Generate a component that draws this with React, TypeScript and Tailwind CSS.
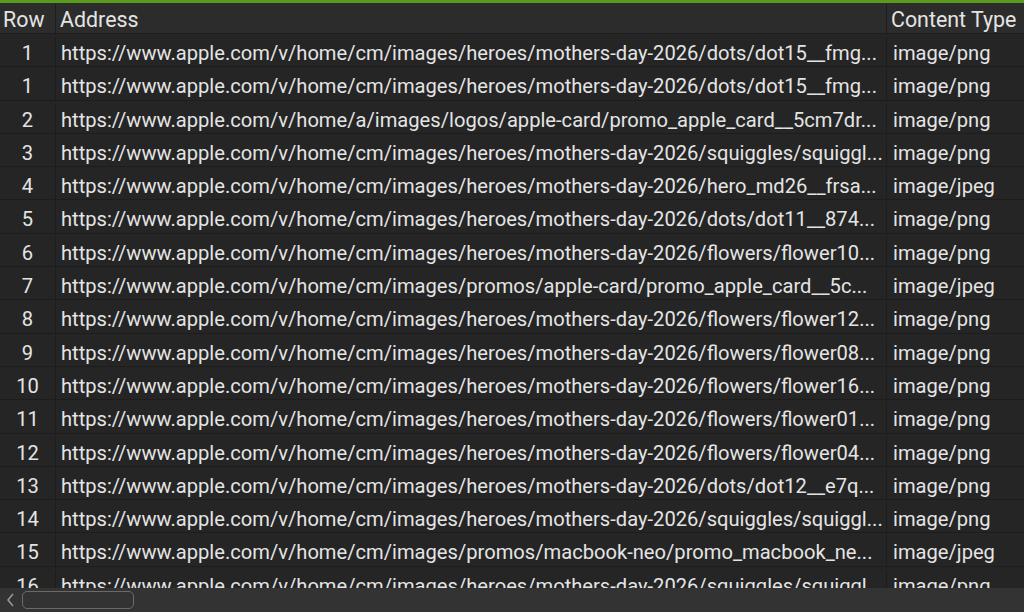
import React from "react";

const rows: [string, string, string][] = [
  ["1", "https://www.apple.com/v/home/cm/images/heroes/mothers-day-2026/dots/dot15__fmg...", "image/png"],
  ["1", "https://www.apple.com/v/home/cm/images/heroes/mothers-day-2026/dots/dot15__fmg...", "image/png"],
  ["2", "https://www.apple.com/v/home/a/images/logos/apple-card/promo_apple_card__5cm7dr...", "image/png"],
  ["3", "https://www.apple.com/v/home/cm/images/heroes/mothers-day-2026/squiggles/squiggl...", "image/png"],
  ["4", "https://www.apple.com/v/home/cm/images/heroes/mothers-day-2026/hero_md26__frsa...", "image/jpeg"],
  ["5", "https://www.apple.com/v/home/cm/images/heroes/mothers-day-2026/dots/dot11__874...", "image/png"],
  ["6", "https://www.apple.com/v/home/cm/images/heroes/mothers-day-2026/flowers/flower10...", "image/png"],
  ["7", "https://www.apple.com/v/home/cm/images/promos/apple-card/promo_apple_card__5c...", "image/jpeg"],
  ["8", "https://www.apple.com/v/home/cm/images/heroes/mothers-day-2026/flowers/flower12...", "image/png"],
  ["9", "https://www.apple.com/v/home/cm/images/heroes/mothers-day-2026/flowers/flower08...", "image/png"],
  ["10", "https://www.apple.com/v/home/cm/images/heroes/mothers-day-2026/flowers/flower16...", "image/png"],
  ["11", "https://www.apple.com/v/home/cm/images/heroes/mothers-day-2026/flowers/flower01...", "image/png"],
  ["12", "https://www.apple.com/v/home/cm/images/heroes/mothers-day-2026/flowers/flower04...", "image/png"],
  ["13", "https://www.apple.com/v/home/cm/images/heroes/mothers-day-2026/dots/dot12__e7q...", "image/png"],
  ["14", "https://www.apple.com/v/home/cm/images/heroes/mothers-day-2026/squiggles/squiggl...", "image/png"],
  ["15", "https://www.apple.com/v/home/cm/images/promos/macbook-neo/promo_macbook_ne...", "image/jpeg"],
  ["16", "https://www.apple.com/v/home/cm/images/heroes/mothers-day-2026/squiggles/squiggl...", "image/png"],
];

export default function App() {
  return (
    <div
      className="w-[1024px] h-[612px] overflow-hidden bg-[#252525] flex flex-col text-[#e4e4e4]"
      style={{ fontFamily: "Roboto, 'Noto Sans', sans-serif" }}
    >
      <div className="h-[3px] bg-[#5b9a1c] shrink-0" />
      <div className="flex-1 overflow-hidden">
        <div className="grid grid-cols-[56px_831px_137px] h-[31px] bg-[#2c2c2c] border-b border-[#1d1d1d] text-[21.4px] leading-[31px] pt-[1px]">
          <div className="pl-[3px] border-r border-[#1d1d1d]">Row</div>
          <div className="pl-[4px] border-r border-[#1d1d1d]">Address</div>
          <div className="pl-[4px]">Content Type</div>
        </div>
        {rows.map((r, i) => (
          <div
            key={i}
            className="grid grid-cols-[56px_831px_137px] h-[33.3px] border-b border-[#1d1d1d] text-[20.15px] leading-[32px] pt-[3px]"
          >
            <div className="text-center border-r border-[#1d1d1d]">{r[0]}</div>
            <div className="pl-[5px] border-r border-[#1d1d1d] whitespace-nowrap overflow-hidden">{r[1]}</div>
            <div className="pl-[6px] whitespace-nowrap">{r[2]}</div>
          </div>
        ))}
      </div>
      <div className="h-[24px] shrink-0 bg-[#333333] flex items-center">
        <svg width="20" height="20" viewBox="0 0 20 20" className="ml-[1px]">
          <path d="M12 4 L7 10 L12 16" stroke="#9a9a9a" strokeWidth="1.5" fill="none" />
        </svg>
        <div className="ml-[1px] w-[112px] h-[18px] rounded-[5px] border border-[#6a6a6a]" />
      </div>
    </div>
  );
}
